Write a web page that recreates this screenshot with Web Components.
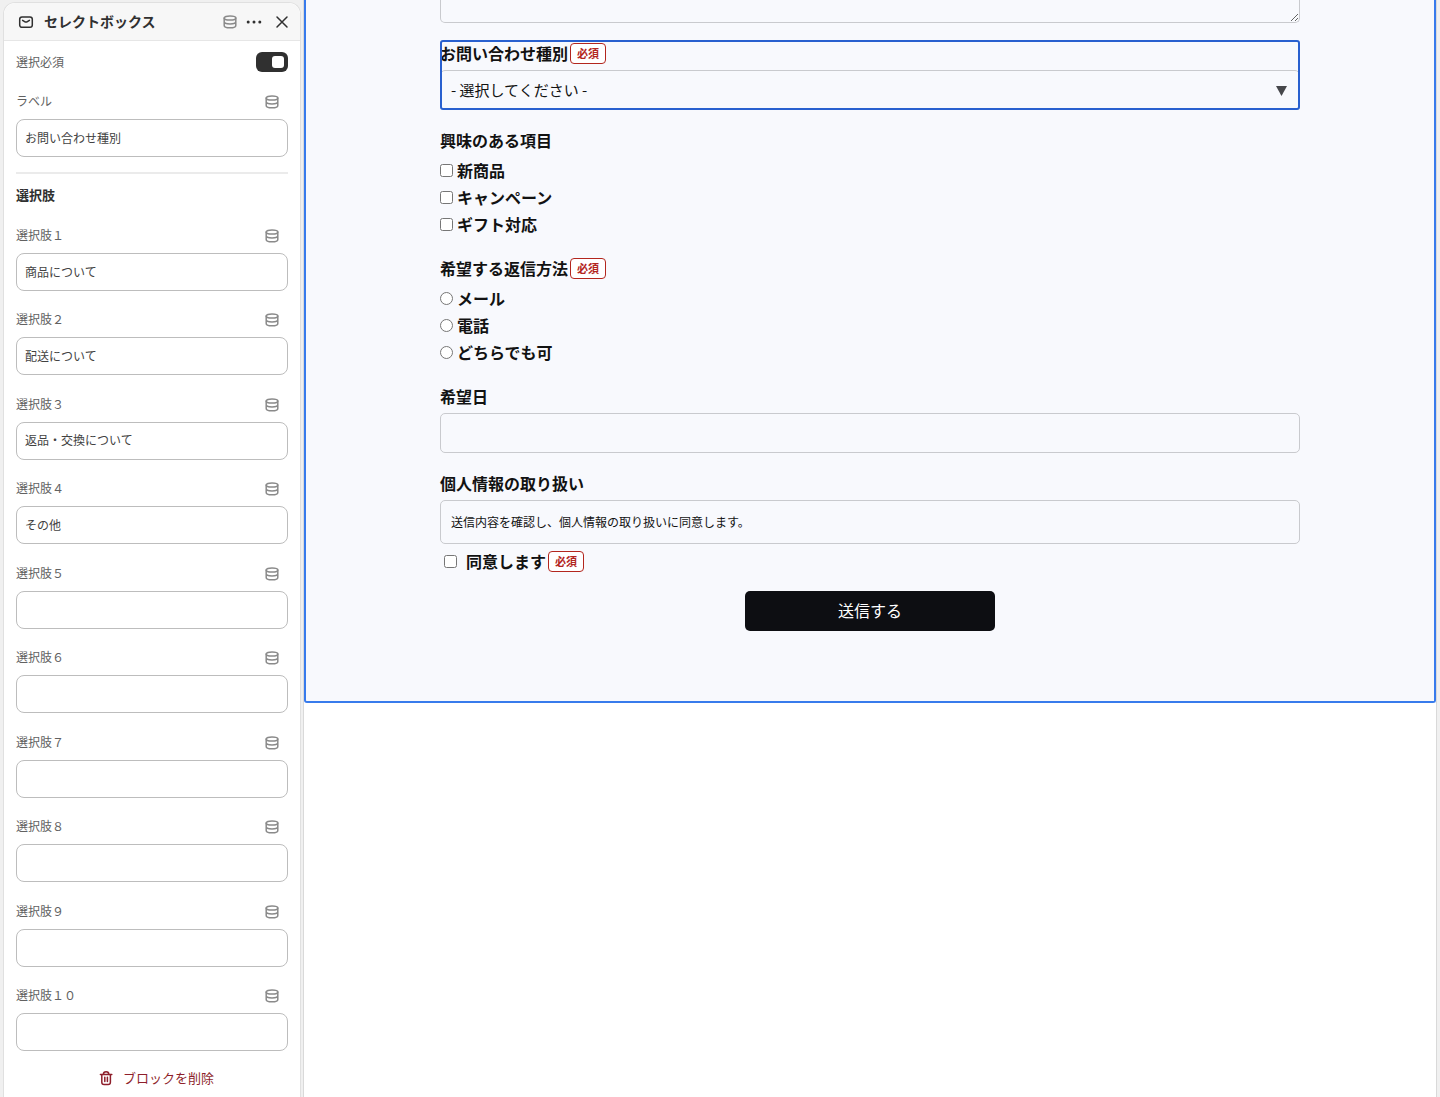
<!DOCTYPE html>
<html lang="ja">
<head>
<meta charset="utf-8">
<title>セレクトボックス</title>
<style>
	body {
		margin: 0;
		background: #f0f0f0;
		color: #121212;
		font-family: "Noto Sans CJK JP", sans-serif;
	}
</style>
</head>
<body>
<editor-layout>
	<settings-panel slot="panel" heading="セレクトボックス">
		<toggle-row label="選択必須"></toggle-row>
		<setting-field label="ラベル" value="お問い合わせ種別"></setting-field>
		<setting-group heading="選択肢">
			<setting-field label="選択肢１" value="商品について"></setting-field>
			<setting-field label="選択肢２" value="配送について"></setting-field>
			<setting-field label="選択肢３" value="返品・交換について"></setting-field>
			<setting-field label="選択肢４" value="その他"></setting-field>
			<setting-field label="選択肢５"></setting-field>
			<setting-field label="選択肢６"></setting-field>
			<setting-field label="選択肢７"></setting-field>
			<setting-field label="選択肢８"></setting-field>
			<setting-field label="選択肢９"></setting-field>
			<setting-field label="選択肢１０"></setting-field>
		</setting-group>
	</settings-panel>
	<contact-form>
		<message-field></message-field>
		<select-field label="お問い合わせ種別" required placeholder="- 選択してください -"></select-field>
		<choice-group label="興味のある項目" type="checkbox" options="新商品,キャンペーン,ギフト対応"></choice-group>
		<choice-group label="希望する返信方法" type="radio" required options="メール,電話,どちらでも可"></choice-group>
		<text-field label="希望日"></text-field>
		<privacy-field label="個人情報の取り扱い" agree="同意します">送信内容を確認し、個人情報の取り扱いに同意します。</privacy-field>
	</contact-form>
</editor-layout>

<script>
// shared icon drawings, all on a 16px grid
const icons = {
	database: `<ellipse cx="8" cy="4" rx="5.8" ry="2.1"/>
		<path d="M2.2 4v7.4c0 1.5 2.5 2.4 5.8 2.4s5.8-.9 5.8-2.4V4M2.2 7.8c0 1.2 2.5 2.1 5.8 2.1s5.8-.9 5.8-2.1"/>`,
	mail: `<rect x="1.7" y="3" width="12.6" height="10.3" rx="2.3"/>
		<path d="M4.6 6.3l2 1.3c.9.6 1.9.6 2.8 0l2-1.3"/>`,
	more: `<g fill="currentColor" stroke="none"><circle cx="2.2" cy="8" r="1.5"/><circle cx="8" cy="8" r="1.5"/><circle cx="13.8" cy="8" r="1.5"/></g>`,
	close: `<path d="M3 3l10 10M13 3L3 13"/>`,
	trash: `<path d="M2.4 4.4h11.4M5.4 4.2C5.4 2.6 6.4 1.7 8.1 1.7s2.7.9 2.7 2.5M3.8 4.6v7.6c0 1.6.8 2.3 2.3 2.3h4c1.5 0 2.3-.7 2.3-2.3V4.6M6.8 7.2v4.4M9.4 7.2v4.4"/>`,
};

class UiIcon extends HTMLElement {
	constructor() {
		super();
		this.attachShadow({ mode: "open" });
	}
	connectedCallback() {
		this.shadowRoot.innerHTML = `
			<style>
				:host { display: block; width: 16px; height: 16px; flex: none; }
				svg {
					display: block;
					fill: none;
					stroke: currentColor;
					stroke-width: 1.5;
					stroke-linecap: round;
					stroke-linejoin: round;
				}
			</style>
			<svg width="16" height="16" viewBox="0 0 16 16" aria-hidden="true">${icons[this.getAttribute("name")]}</svg>
			`;
	}
}

class EditorLayout extends HTMLElement {
	constructor() {
		super();
		this.attachShadow({ mode: "open" });
		this.shadowRoot.innerHTML = `
			<style>
				:host {
					display: grid;
					grid-template-columns: 298px minmax(0, 1fr);
					min-height: 100vh;
					box-sizing: border-box;
					padding: 0 3px;
				}
				main {
					margin-left: 2px;
					background: #fff;
					border: solid #d9d9d9;
					border-width: 0 1px;
				}
			</style>
			<slot name="panel"></slot>
			<main><slot></slot></main>
			`;
	}
}

class SettingsPanel extends HTMLElement {
	constructor() {
		super();
		this.attachShadow({ mode: "open" });
	}
	connectedCallback() {
		this.shadowRoot.innerHTML = `
			<style>
				:host {
					display: flex;
					flex-direction: column;
					margin-top: 2px;
					background: #fff;
					border: 1px solid #e0e0e0;
					border-bottom: 0;
					border-radius: 12px 12px 0 0;
					color: #303030;
				}
				header {
					display: flex;
					align-items: center;
					height: 37px;
					padding: 0 10px 0 14px;
					background: #f7f7f7;
					border-bottom: 1px solid #e6e6e6;
					border-radius: 12px 12px 0 0;
				}
				h1 {
					flex: 1;
					margin: 0 0 2px 10px;
					font-size: 14px;
					line-height: 20px;
					font-weight: 600;
				}
				button {
					display: flex;
					align-items: center;
					padding: 0;
					border: 0;
					background: none;
					font: inherit;
					color: inherit;
				}
				header button { margin-left: 8px; }
				header button:last-child { margin-left: 12px; }
				.source { color: #8a8a8a; }
				.content {
					flex: 1;
					display: flex;
					flex-direction: column;
					padding: 0 12px;
				}
				.delete {
					align-self: center;
					gap: 9px;
					height: 46px;
					padding: 16px 8px 8px;
					box-sizing: border-box;
					margin-left: 8px;
					color: #8e1f2b;
					font-size: 13px;
					line-height: 20px;
				}
			</style>
			<header>
				<ui-icon name="mail"></ui-icon>
				<h1>${this.getAttribute("heading")}</h1>
				<button class="source" aria-label="データソース"><ui-icon name="database"></ui-icon></button>
				<button aria-label="その他の操作"><ui-icon name="more"></ui-icon></button>
				<button aria-label="閉じる"><ui-icon name="close"></ui-icon></button>
			</header>
			<div class="content">
				<slot></slot>
				<button class="delete"><ui-icon name="trash"></ui-icon>ブロックを削除</button>
			</div>
			`;
	}
}

class ToggleRow extends HTMLElement {
	constructor() {
		super();
		this.attachShadow({ mode: "open" });
	}
	connectedCallback() {
		this.shadowRoot.innerHTML = `
			<style>
				:host {
					display: flex;
					align-items: center;
					justify-content: space-between;
					height: 42px;
					margin-bottom: 4px;
					font-size: 12px;
					line-height: 20px;
					color: #616161;
				}
				input {
					appearance: none;
					display: flex;
					align-items: center;
					width: 32px;
					height: 20px;
					margin: 0;
					padding: 0 4px;
					box-sizing: border-box;
					border-radius: 6px;
					background: #8a8a8a;
				}
				input::after {
					content: "";
					width: 12px;
					height: 12px;
					border-radius: 3px;
					background: #fff;
				}
				input:checked {
					justify-content: flex-end;
					background: #303030;
				}
			</style>
			<label for="toggle">${this.getAttribute("label")}</label>
			<input id="toggle" type="checkbox" role="switch" checked>
			`;
	}
}

class SettingField extends HTMLElement {
	constructor() {
		super();
		this.attachShadow({ mode: "open" });
	}
	connectedCallback() {
		this.shadowRoot.innerHTML = `
			<style>
				:host { display: block; font-size: 12px; line-height: 20px; }
				.top {
					display: flex;
					align-items: center;
					justify-content: space-between;
					height: 28px;
					margin-bottom: 4px;
					padding-right: 8px;
					color: #616161;
				}
				button {
					padding: 2px 0 0;
					border: 0;
					background: none;
					color: #8a8a8a;
				}
				input {
					display: block;
					width: 100%;
					height: 38px;
					box-sizing: border-box;
					padding: 0 8px 2px;
					border: 1px solid #bdbdbd;
					border-radius: 8px;
					background: #fff;
					color: #424242;
					font: inherit;
				}
			</style>
			<div class="top">
				<label for="field">${this.getAttribute("label")}</label>
				<button aria-label="動的ソースを接続"><ui-icon name="database"></ui-icon></button>
			</div>
			<input id="field" type="text" value="${this.getAttribute("value") || ""}">
			`;
	}
}

class SettingGroup extends HTMLElement {
	constructor() {
		super();
		this.attachShadow({ mode: "open" });
	}
	connectedCallback() {
		// fields share out whatever height the panel has left
		this.shadowRoot.innerHTML = `
			<style>
				:host {
					flex: 1;
					display: flex;
					flex-direction: column;
					margin-top: 15px;
					border-top: 2px solid #ebebeb;
				}
				h2 {
					margin: 11px 0 16px;
					font-size: 13px;
					line-height: 20px;
					font-weight: 600;
				}
				div {
					flex: 1;
					display: flex;
					flex-direction: column;
					justify-content: space-between;
				}
			</style>
			<h2>${this.getAttribute("heading")}</h2>
			<div><slot></slot></div>
			`;
	}
}

class RequiredBadge extends HTMLElement {
	constructor() {
		super();
		this.attachShadow({ mode: "open" });
		this.shadowRoot.innerHTML = `
			<style>
				:host {
					display: inline-block;
					padding: 0 6px;
					border: 1px solid #b3261e;
					border-radius: 4px;
					background: #fff;
					color: #b3261e;
					font-size: 11px;
					line-height: 19px;
					font-weight: 700;
				}
			</style>
			<slot>必須</slot>
			`;
	}
}

class ContactForm extends HTMLElement {
	constructor() {
		super();
		this.attachShadow({ mode: "open" });
		this.shadowRoot.innerHTML = `
			<style>
				:host {
					display: block;
					padding: 0 134px 70px;
					background: #f8f9fd;
					border: 2px solid #387bec;
					border-top: 0;
					border-radius: 0 0 3px 3px;
				}
				form {
					display: flex;
					flex-direction: column;
					gap: 17px;
				}
				button {
					align-self: center;
					width: 250px;
					height: 40px;
					margin-top: -6px;
					padding: 0 0 2px;
					border: 0;
					border-radius: 5px;
					background: #0d0e12;
					color: #fff;
					font: inherit;
					font-size: 16px;
				}
			</style>
			<form>
				<slot></slot>
				<button type="button">送信する</button>
			</form>
			`;
	}
}

// common look of the form's fields
const fieldStyles = `
	:host { display: block; }
	.label {
		display: flex;
		align-items: center;
		gap: 2px;
		height: 26px;
		margin-bottom: 4px;
		font-size: 16px;
		line-height: 24px;
		font-weight: 700;
	}
	fieldset { margin: 0; padding: 0; border: 0; }
	legend { padding: 0; }
	.box {
		display: block;
		width: 100%;
		height: 40px;
		box-sizing: border-box;
		padding: 0 10px;
		border: 1px solid #c9cace;
		border-radius: 5px;
		background: transparent;
		color: inherit;
		font: inherit;
		font-size: 15px;
	}
	input[type="checkbox"],
	input[type="radio"] { margin: 0; width: 13px; height: 13px; }
	`;

class FormField extends HTMLElement {
	constructor() {
		super();
		this.attachShadow({ mode: "open" });
	}
	get label() {
		return this.getAttribute("label");
	}
	get badge() {
		return this.hasAttribute("required") ? "<required-badge></required-badge>" : "";
	}
	connectedCallback() {
		this.shadowRoot.innerHTML = `<style>${fieldStyles}</style>${this.render()}`;
	}
}

class MessageField extends FormField {
	render() {
		return `
			<style>
				textarea.box {
					height: 23px;
					border-top: 0;
					border-radius: 0 0 5px 5px;
				}
			</style>
			<textarea class="box" aria-label="お問い合わせ内容"></textarea>
			`;
	}
}

class SelectField extends FormField {
	render() {
		// block being edited: the outline has to stay above the select's own border
		return `
			<style>
				:host {
					isolation: isolate;
					outline: 2px solid #2960cf;
					outline-offset: -2px;
					border-radius: 3px;
				}
				.select { position: relative; z-index: -1; }
				select.box { appearance: none; padding-bottom: 2px; }
				svg {
					position: absolute;
					top: 16px;
					right: 13px;
					fill: #46474b;
					pointer-events: none;
				}
			</style>
			<label class="label" for="select">${this.label}${this.badge}</label>
			<div class="select">
				<select id="select" class="box">
					<option>${this.getAttribute("placeholder")}</option>
				</select>
				<svg width="11" height="10" viewBox="0 0 11 10" aria-hidden="true"><path d="M0 0h11L5.5 10z"/></svg>
			</div>
			`;
	}
}

class ChoiceGroup extends FormField {
	render() {
		const type = this.getAttribute("type");
		const items = this.getAttribute("options").split(",").map((text) => `
			<label class="item"><input type="${type}" name="choice">${text}</label>`);
		return `
			<style>
				.item {
					display: flex;
					align-items: center;
					gap: 4px;
					font-size: 16px;
					line-height: 27px;
					font-weight: 700;
				}
			</style>
			<fieldset>
				<legend class="label">${this.label}${this.badge}</legend>
				${items.join("")}
			</fieldset>
			`;
	}
}

class TextField extends FormField {
	render() {
		return `
			<label class="label" for="text">${this.label}${this.badge}</label>
			<input id="text" class="box" type="text">
			`;
	}
}

class PrivacyField extends FormField {
	render() {
		return `
			<style>
				.box {
					height: auto;
					font-size: 12px;
					line-height: 42px;
				}
				.agree {
					height: 34px;
					margin-bottom: 2px;
				}
				.agree input { margin: 0 7px 0 4px; }
			</style>
			<div class="label">${this.label}</div>
			<div class="box"><slot></slot></div>
			<label class="label agree"><input type="checkbox">${this.getAttribute("agree")}<required-badge></required-badge></label>
			`;
	}
}

customElements.define("ui-icon", UiIcon);
customElements.define("editor-layout", EditorLayout);
customElements.define("settings-panel", SettingsPanel);
customElements.define("toggle-row", ToggleRow);
customElements.define("setting-field", SettingField);
customElements.define("setting-group", SettingGroup);
customElements.define("required-badge", RequiredBadge);
customElements.define("contact-form", ContactForm);
customElements.define("message-field", MessageField);
customElements.define("select-field", SelectField);
customElements.define("choice-group", ChoiceGroup);
customElements.define("text-field", TextField);
customElements.define("privacy-field", PrivacyField);
</script>
</body>
</html>
